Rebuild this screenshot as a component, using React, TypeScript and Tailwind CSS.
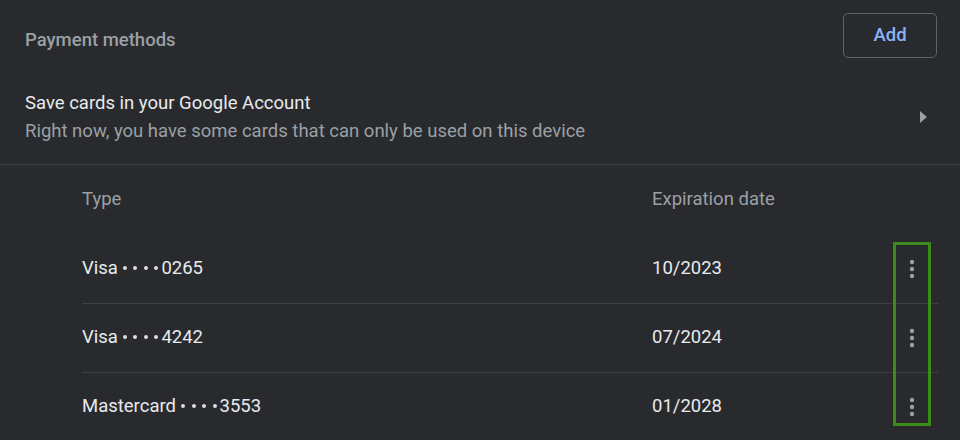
import React from "react";

const cards = [
  { type: "Visa", last4: "0265", exp: "10/2023" },
  { type: "Visa", last4: "4242", exp: "07/2024" },
  { type: "Mastercard", last4: "3553", exp: "01/2028" },
];

function MoreIcon() {
  return (
    <svg width="6" height="20" viewBox="0 0 6 20" fill="#9aa0a6">
      <circle cx="3" cy="3" r="2.2" />
      <circle cx="3" cy="10" r="2.2" />
      <circle cx="3" cy="17" r="2.2" />
    </svg>
  );
}

// four masking dots, spaced like Chrome's obfuscated card number
function Mask() {
  return (
    <span className="ml-[5px] mr-[3px] inline-flex translate-y-[-1px] items-center gap-[6.5px] align-middle">
      {[0, 1, 2, 3].map((i) => (
        <span key={i} className="size-[4px] rounded-full bg-[#dadce0]" />
      ))}
    </span>
  );
}

export default function App() {
  return (
    <div className="relative h-[440px] w-[960px] overflow-hidden bg-[#292a2d] font-['Roboto','Liberation_Sans',sans-serif] text-[18.5px] text-[#e8eaed]">
      {/* section header */}
      <div className="flex items-start justify-between pl-[25px] pr-[23px] pt-[13px]">
        <h2 className="mt-[15px] leading-6 font-medium text-[#9aa0a6]">Payment methods</h2>
        <button
          type="button"
          className="flex h-[45px] w-[94px] items-center justify-center rounded-[5px] border border-[#5f6368] font-medium text-[#8ab4f8]"
        >
          Add
        </button>
      </div>

      {/* save to account */}
      <div className="flex items-center justify-between border-b border-[#3f4043] pl-[25px] pr-[33px] pt-[31px] pb-[19px]">
        <div>
          <p className="leading-7 text-[#e8eaed]">Save cards in your Google Account</p>
          <p className="leading-7 text-[#9aa0a6]">
            Right now, you have some cards that can only be used on this device
          </p>
        </div>
        <svg width="7" height="12" viewBox="0 0 7 12" fill="#9aa0a6">
          <path d="M0 0 L7 6 L0 12 Z" />
        </svg>
      </div>

      {/* card list */}
      <div className="ml-[82px] mr-[22px]">
        <div className="flex h-[69px] items-center text-[#9aa0a6]">
          <span className="w-[570px]">Type</span>
          <span className="flex-1">Expiration date</span>
        </div>
        {cards.map((c, i) => (
          <div
            key={c.last4}
            className={`flex h-[69px] items-center ${i > 0 ? "border-t border-[#3f4043]" : ""}`}
          >
            <span className="w-[570px]">
              {c.type}
              <Mask />
              {c.last4}
            </span>
            <span className="flex-1">{c.exp}</span>
            <button type="button" className="flex h-[40px] w-[52px] items-center justify-center">
              <MoreIcon />
            </button>
          </div>
        ))}
      </div>

      {/* highlight box */}
      <div className="absolute left-[893px] top-[242px] h-[184px] w-[38px] border-[3px] border-[#3b8c1a]" />
    </div>
  );
}
